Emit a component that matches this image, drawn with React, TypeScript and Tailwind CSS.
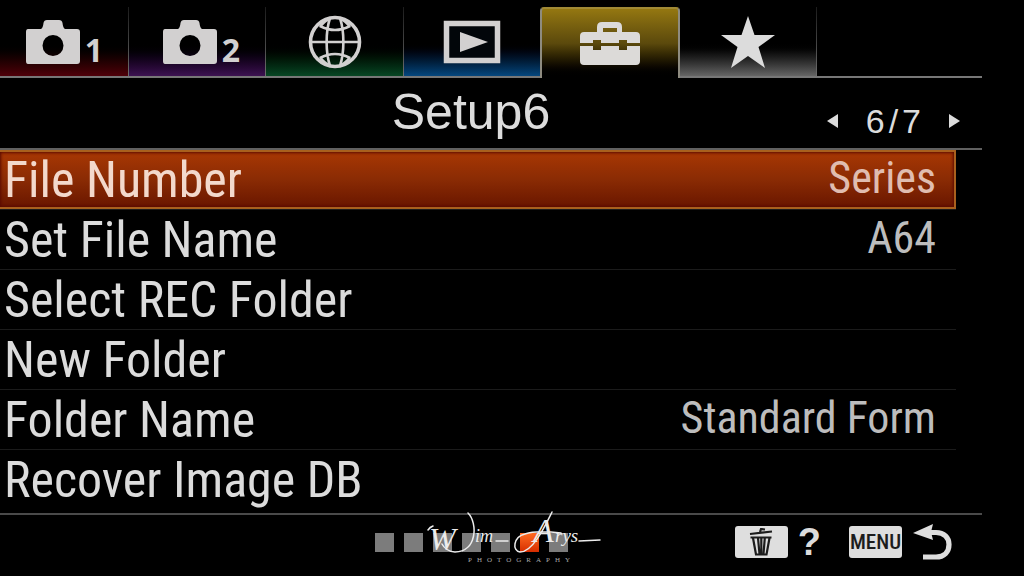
import { useState, type ReactNode } from "react";

const CameraIcon = () => (
  <svg viewBox="0 0 56 46" className="h-[46px] w-[56px]" fill="#d2d0d0" aria-hidden="true">
    <path
      fillRule="evenodd"
      d="M3 10H16Q18 9 18.500 4Q19 1 22 1H34Q37 1 37.500 4Q38 9 40 10H52Q55 10 55 13V42Q55 45 52 45H3Q1 45 1 42V13Q1 10 3 10ZM28 16A10.500 10.500 0 1 0 28 37A10.500 10.500 0 1 0 28 16Z"
    />
  </svg>
);

const GlobeIcon = () => (
  <svg viewBox="0 0 54 54" className="size-[54px]" fill="none" stroke="#d2d0d0" strokeWidth="2.600" aria-hidden="true">
    <circle cx="27" cy="27" r="24.500" strokeWidth="3.600" />
    <path d="M3 27H51M22 3C17.500 17 17.500 37 22 51M32 3C36.500 17 36.500 37 32 51M12 11Q27 19 42 11M12 43Q27 35 42 43M22 3Q15 7 12 12M32 3Q39 7 42 12M22 51Q15 47 12 42M32 51Q39 47 42 42" />
  </svg>
);

const PlaybackIcon = () => (
  <svg viewBox="0 0 58 44" className="h-[44px] w-[58px]" aria-hidden="true">
    <rect x="3.500" y="3.500" width="51" height="37" fill="#02060a" stroke="#d2d0d0" strokeWidth="5.500" />
    <path d="M17 12L45 22L17 32Z" fill="#d2d0d0" />
  </svg>
);

const ToolboxIcon = () => (
  <svg viewBox="0 0 62 46" className="h-[46px] w-[62px]" fill="#dcdad8" aria-hidden="true">
    <path fillRule="evenodd" d="M18 12V6Q18 1 23 1H38Q43 1 43 6V12ZM24 7V11H38V7Z" />
    <path d="M5 11H57Q61 11 61 15V22H48V19H40V22H22V19H14V22H1V15Q1 11 5 11Z" />
    <path d="M1 25H14V29H22V25H40V29H48V25H61V40Q61 44 57 44H5Q1 44 1 40Z" />
  </svg>
);

const StarIcon = () => (
  <svg viewBox="0 0 56 54" className="h-[54px] w-[56px]" fill="#dcdcdc" aria-hidden="true">
    <path d="M28 1L34.500 20H55L38.500 32L45 53L28 41L11 53L17.500 32L1 20H21.500Z" />
  </svg>
);

const TrashIcon = () => (
  <svg viewBox="0 0 24 28" className="h-[28px] w-[24px]" fill="none" stroke="#1c1c1c" strokeWidth="2.200" aria-hidden="true">
    <path d="M1 6L23 3.500M11 4L12 1L16 1.500" />
    <path d="M1.500 9.500H22.500M4 10L7 26.500H17.500L20.500 10M9 10L10.500 26M12.300 10V26M15.800 10L14.500 26" />
  </svg>
);

const ReturnIcon = () => (
  <svg viewBox="0 0 40 37" className="h-[37px] w-[40px]" aria-hidden="true">
    <path d="M16 8.500H23C31 8.500 36 13.500 36 20.500C36 28 31 33 23 33H10" fill="none" stroke="#dedede" strokeWidth="5.200" />
    <path d="M0 9L20 0L18 8L20 16Z" fill="#dedede" />
  </svg>
);

const Signature = () => (
  <svg viewBox="0 0 176 56" className="h-[56px] w-[176px]" fill="none" stroke="#ececec" strokeWidth="1.500" strokeLinecap="round" role="img" aria-label="Wim Arys Photography">
    <g fill="#ececec" stroke="none" fontFamily="'Liberation Serif', serif" fontStyle="italic">
      <text x="3" y="41" fontSize="32">W</text>
      <text x="49" y="33" fontSize="18">im</text>
      <text x="107" y="33" fontSize="34">A</text>
      <text x="129" y="33" fontSize="19">rys</text>
    </g>
    <path d="M2 21Q4 18 7 17M42 4C52 14 51 43 29 43C23 43 18 39 16 35M70 32H82M153 32L174 31" />
    <path d="M126 3C119 17 107 43 94 43C86 42 87 28 99 25C107 22 119 22 135 24" />
    <text x="42" y="53" fontSize="7" fill="#a8a8a8" stroke="none" fontFamily="'Liberation Serif', serif" className="tracking-[5px]">
      PHOTOGRAPHY
    </text>
  </svg>
);

type Tab = { id: string; icon: ReactNode; digit?: string; style: string };

const tabs: Tab[] = [
  { id: "Camera settings 1", icon: <CameraIcon />, digit: "1", style: "w-[129px] from-[#50000a]" },
  { id: "Camera settings 2", icon: <CameraIcon />, digit: "2", style: "w-[137px] pl-2 from-[#3d1252]" },
  { id: "Network", icon: <GlobeIcon />, style: "w-[138px] from-[#074724]" },
  { id: "Playback", icon: <PlaybackIcon />, style: "w-[136px] from-[#04477f]" },
  { id: "Setup", icon: <ToolboxIcon />, style: "" },
  { id: "My Menu", icon: <StarIcon />, style: "w-[137px] from-[#666]" },
];

const rows = [
  { label: "File Number", value: "Series" },
  { label: "Set File Name", value: "A64" },
  { label: "Select REC Folder", value: "" },
  { label: "New Folder", value: "" },
  { label: "Folder Name", value: "Standard Form" },
  { label: "Recover Image DB", value: "" },
];

export default function App() {
  const [selected, setSelected] = useState(0);

  return (
    <main className="min-h-screen overflow-hidden bg-black font-['Liberation_Sans',sans-serif] text-[#dcdcdc]">
      <nav aria-label="Menu tabs" className="mr-[42px] flex pt-[7px]">
        {tabs.map((tab) =>
          tab.id === "Setup" ? (
            <button
              key={tab.id}
              aria-label={tab.id}
              aria-current="page"
              className="flex h-[71px] w-[140px] shrink-0 items-center justify-center rounded-t-[4px] border-x-2 border-t-2 border-[#8e8b80] border-t-[#a18a35] bg-linear-to-b from-[#947711] via-[#5b490c] to-black"
            >
              {tab.icon}
            </button>
          ) : (
            <button
              key={tab.id}
              aria-label={tab.id}
              className={`flex h-[71px] shrink-0 items-center justify-center border-b-2 border-[#777] bg-linear-to-t to-black to-50% ${tab.style}`}
            >
              <span className="flex flex-1 items-center justify-center">
                {tab.icon}
                {tab.digit && (
                  <span className="mt-4 ml-1 font-['Open_Sans',sans-serif] text-[32px] leading-8 font-bold text-[#d2d0d0]">{tab.digit}</span>
                )}
              </span>
              {tab.id !== "Playback" && <span className="h-full w-px bg-linear-to-b from-[#1c1c1c] to-[#6e6e6e]" />}
            </button>
          ),
        )}
        <span className="flex-1 border-b-2 border-[#777]" />
      </nav>

      <header className="mr-[42px] grid h-[72px] grid-cols-[1fr_auto_1fr] border-b-2 border-[#606060] pr-10">
        <h1 className="col-start-2 pt-1 text-[50px] leading-[60px]">Setup6</h1>
        <div className="-mr-[18px] flex items-center justify-end gap-7 pt-4">
          <button aria-label="Previous page">
            <svg viewBox="0 0 11 14" className="h-[14px] w-[11px]" fill="#dcdcdc"><path d="M11 0V14L0 7Z" /></svg>
          </button>
          <span className="flex gap-1 text-[34px] leading-10">
            <span>6</span>
            <span>/</span>
            <span>7</span>
          </span>
          <button aria-label="Next page">
            <svg viewBox="0 0 11 14" className="h-[14px] w-[11px]" fill="#dcdcdc"><path d="M0 0V14L11 7Z" /></svg>
          </button>
        </div>
      </header>

      <ul className="mr-[68px] pb-1 font-['Roboto_Condensed',sans-serif]">
        {rows.map((row, i) => (
          <li key={row.label} className="border-b border-[#1b1b1b] last:border-0">
            <button
              onClick={() => setSelected(i)}
              className={
                i === selected
                  ? "flex h-[59px] w-full items-center justify-between border-y-2 border-r-2 border-[#a9601d] bg-linear-to-b from-[#a83703] via-[#8a2b04] to-[#6a1600] pr-[18px] pl-1 text-[#f3d9cc] inset-shadow-[0_0_3px_1px_#5a0a00]"
                  : "flex h-[59px] w-full items-center justify-between pr-5 pl-1"
              }
            >
              <span className="text-[50px] leading-[58px]">{row.label}</span>
              <span className={`pb-1 text-[44px] leading-[54px] ${i === selected ? "text-[#e0bdb0]" : "text-[#bdbdbd]"}`}>{row.value}</span>
            </button>
          </li>
        ))}
      </ul>

      <footer className="mr-[42px] grid h-[60px] grid-cols-[1fr_auto_1fr] items-center border-t-2 border-[#4a4a4a] pr-10 pb-1">
        <div className="relative col-start-2 flex gap-[10px]">
          {[0, 1, 2, 3, 4, 5, 6].map((n) => (
            <span key={n} className={`size-[19px] ${n === 5 ? "bg-linear-to-b from-[#ff6a20] to-[#d62c00]" : "bg-[#7c7c7c]"}`} />
          ))}
          <div className="absolute -top-6 left-[51px]">
            <Signature />
          </div>
        </div>
        <div className="-mr-[11px] flex items-center justify-end">
          <button aria-label="Delete help" className="flex items-center gap-[10px]">
            <span className="flex h-8 w-[53px] items-center justify-center rounded-[3px] bg-[#dedede]"><TrashIcon /></span>
            <span className="text-[38px] leading-8 font-bold">?</span>
          </button>
          <button aria-label="Menu back" className="ml-7 flex items-center gap-[11px]">
            <span className="flex h-8 w-[53px] items-center justify-center rounded-[3px] bg-[#dedede] font-['Roboto_Condensed',sans-serif] text-[21px] leading-8 font-medium text-[#1c1c1c]">MENU</span>
            <ReturnIcon />
          </button>
        </div>
      </footer>
    </main>
  );
}
